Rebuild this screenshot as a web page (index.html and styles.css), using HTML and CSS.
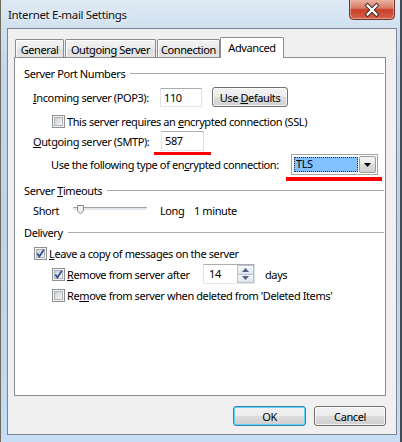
FILE: index.html
```html
<!DOCTYPE html>
<html>
<head>
<meta charset="utf-8">
<link rel="stylesheet" href="styles.css">
</head>
<body>
<div class="window">
  <div class="titlebar">
    <span class="title">Internet E-mail Settings</span>
    <div class="close">
      <svg width="46" height="20" viewBox="0 0 46 20">
        <defs>
          <linearGradient id="cg" x1="0" y1="0" x2="0" y2="1">
            <stop offset="0" stop-color="#eab0a2"/>
            <stop offset="0.42" stop-color="#d97a64"/>
            <stop offset="0.5" stop-color="#c6402a"/>
            <stop offset="1" stop-color="#d9654c"/>
          </linearGradient>
        </defs>
        <path d="M0.5 0 V15.5 Q0.5 19.5 4.5 19.5 H41.5 Q45.5 19.5 45.5 15.5 V0" fill="url(#cg)" stroke="#6b3329"/>
        <path d="M1.5 0 V15 Q1.5 18.5 5 18.5 H41 Q44.5 18.5 44.5 15 V0" fill="none" stroke="rgba(255,220,210,0.45)"/>
        <path d="M18.5 5.5 L27.5 14.5 M27.5 5.5 L18.5 14.5" stroke="#40302c" stroke-width="4.2" stroke-linecap="square"/>
        <path d="M18.5 5.5 L27.5 14.5 M27.5 5.5 L18.5 14.5" stroke="#ffffff" stroke-width="2.2" stroke-linecap="square"/>
      </svg>
    </div>
  </div>

  <div class="client">
    <div class="tabs">
      <div class="tab t-general"><span>General</span></div>
      <div class="tab t-outgoing"><span>Outgoing Server</span></div>
      <div class="tab t-connection"><span>Connection</span></div>
      <div class="tab active t-advanced"><span>Advanced</span></div>
    </div>

    <div class="panel">
      <div class="ghead g1"><span>Server Port Numbers</span><i class="gline"></i></div>

      <div class="row r-incoming">
        <span class="lbl w-in"><u>I</u>ncoming server (POP3):</span>
        <div class="tb tb-in">110</div>
        <div class="btn btn-defaults"><span>Use <u>D</u>efaults</span></div>
      </div>

      <div class="row r-ssl">
        <span class="cb"><i></i></span>
        <span class="cbl">This server requires an <u>e</u>ncrypted connection (SSL)</span>
      </div>

      <div class="row r-outgoing">
        <span class="lbl w-out"><u>O</u>utgoing server (SMTP):</span>
        <div class="tb tb-out">587</div>
      </div>

      <div class="row r-use">
        <span class="lbl w-use">Use the following type of en<u>c</u>rypted connection:</span>
        <div class="combo">
          <div class="combo-val"><span class="sel">TLS</span></div>
          <div class="combo-btn">
            <svg width="7" height="4" viewBox="0 0 7 4"><path d="M0 0 H7 L3.5 4 Z" fill="#000"/></svg>
          </div>
        </div>
      </div>

      <div class="ghead g2"><span>Server <u>T</u>imeouts</span><i class="gline"></i></div>

      <div class="row r-short">
        <span class="lbl w-short">Short</span>
        <span class="slider">
          <svg width="74" height="16" viewBox="0 0 74 16">
            <rect x="0" y="5" width="74" height="1" fill="#a3a3a3"/>
            <rect x="0" y="6" width="74" height="2" fill="#e3e8ec"/>
            <path d="M4.5 3.5 H10.5 V9 L7.5 11.5 L4.5 9 Z" fill="#f1f1f1" stroke="#8a8a8a"/>
          </svg>
        </span>
        <span class="lbl w-long">Long</span>
        <span class="lbl">1 minute</span>
      </div>

      <div class="ghead g3"><span>Delivery</span><i class="gline"></i></div>

      <div class="row r-leave">
        <span class="cb checked"><i></i>
          <svg class="chk" width="13" height="13" viewBox="0 0 13 13"><path d="M3.3 6.4 L5.4 9.4 L9.8 2.8" fill="none" stroke="#2e4d91" stroke-width="1.7"/></svg>
        </span>
        <span class="cbl"><u>L</u>eave a copy of messages on the server</span>
      </div>

      <div class="row r-after">
        <span class="cb checked"><i></i>
          <svg class="chk" width="13" height="13" viewBox="0 0 13 13"><path d="M3.3 6.4 L5.4 9.4 L9.8 2.8" fill="none" stroke="#2e4d91" stroke-width="1.7"/></svg>
        </span>
        <span class="cbl w-after"><u>R</u>emove from server after</span>
        <div class="spin">
          <span class="spin-val">14</span>
          <span class="spin-btns">
            <span class="sb up"><svg width="7" height="4" viewBox="0 0 7 4"><path d="M0 4 H7 L3.5 0 Z" fill="#4d6185"/></svg></span>
            <span class="sb down"><svg width="7" height="4" viewBox="0 0 7 4"><path d="M0 0 H7 L3.5 4 Z" fill="#4d6185"/></svg></span>
          </span>
        </div>
        <span class="lbl days">days</span>
      </div>

      <div class="row r-deleted">
        <span class="cb"><i></i></span>
        <span class="cbl">Re<u>m</u>ove from server when deleted from 'Deleted Items'</span>
      </div>
    </div>

    <div class="buttons">
      <div class="btn default b-ok"><span>OK</span></div>
      <div class="btn b-cancel"><span>Cancel</span></div>
    </div>
  </div>

  <i class="mark mark1"></i>
  <i class="mark mark2"></i>
</div>
</body>
</html>
```

FILE: styles.css
```css
* { box-sizing: border-box; }
html, body { margin: 0; padding: 0; }
body {
  width: 402px;
  height: 442px;
  overflow: hidden;
  font-family: "Noto Sans", "DejaVu Sans", sans-serif;
  font-size: 11px;
  letter-spacing: -0.4px;
  color: #000;
  background: #c6dcf2;
}
u { text-decoration: underline; text-underline-offset: 1px; }

.window {
  position: relative;
  width: 402px;
  height: 442px;
  display: flex;
  flex-direction: column;
  border-left: 1px solid #6f6a5a;
  border-right: 2px solid #3e4a58;
  background:
    linear-gradient(to bottom, #dfe9f4 0px, #d3e2f1 24px, #c3d8ee 60px, #bcd3ea 220px, #c2d9f1 400px, #c7def5 442px);
}

.titlebar {
  height: 28px;
  display: flex;
  justify-content: space-between;
  align-items: flex-start;
  padding-left: 7px;
}
.title {
  margin-top: 7px;
  line-height: 16px;
  font-size: 11.5px;
  letter-spacing: -0.35px;
  color: #111;
  text-shadow: 0 0 6px rgba(255,255,255,0.9);
}
.close {
  width: 46px;
  height: 20px;
  margin-right: 5px;
}
.close svg { display: block; }

.client {
  margin-left: 6px;
  width: 390px;
  height: 407px;
  border: 1px solid #7d8590;
  background: #f0f0f0;
  display: flex;
  flex-direction: column;
}

/* tabs */
.tabs {
  display: flex;
  align-items: flex-end;
  height: 21px;
  margin-top: 8px;
  margin-left: 7px;
  margin-bottom: -1px;
  position: relative;
  z-index: 1;
}
.tab {
  height: 18px;
  margin-bottom: 1px;
  margin-right: 1px;
  border: 1px solid #898c95;
  border-bottom: none;
  border-radius: 2px 2px 0 0;
  background: linear-gradient(to bottom, #f3f3f3 0%, #ebebeb 50%, #dedede 50%, #e4e4e4 100%);
  box-shadow: inset 1px 1px 0 #fff;
  display: flex;
  align-items: center;
  justify-content: center;
  padding-top: 1px;
  white-space: nowrap;
}
.t-general { width: 49px; }
.t-outgoing { width: 91px; }
.t-connection { width: 63px; margin-right: 0; }
.tab.active {
  width: 64px;
  height: 21px;
  margin-bottom: 0;
  background: #fff;
  box-shadow: none;
  padding-top: 0;
  padding-bottom: 2px;
}

.panel {
  margin-left: 6px;
  width: 372px;
  height: 339px;
  border: 1px solid #898c95;
  background: #fff;
  display: flex;
  flex-direction: column;
}

/* group headers */
.ghead {
  display: flex;
  align-items: center;
  height: 16px;
  margin-left: 9px;
  margin-right: 1px;
  white-space: nowrap;
}
.gline {
  flex: 1;
  height: 1px;
  margin-left: 5px;
  background: #a8aaad;
}
.g1 { margin-top: 7px; }
.g2 { margin-top: 7px; }
.g3 { margin-top: 6px; }

.row {
  display: flex;
  align-items: center;
  white-space: nowrap;
}
.lbl, .cbl { display: inline-block; }

.r-incoming { height: 20px; margin-top: 6px; margin-left: 18px; }
.w-in { width: 127px; }
.r-ssl { height: 14px; margin-top: 7px; margin-left: 37px; }
.r-outgoing { height: 20px; margin-top: 3px; margin-left: 18px; }
.w-out { width: 128px; }
.r-use { height: 21px; margin-top: 3px; margin-left: 36px; }
.w-use { width: 240px; }
.r-short { height: 16px; margin-top: 4px; margin-left: 18px; }
.w-short { width: 40px; }
.w-long { width: 34px; }
.r-leave { height: 14px; margin-top: 6px; margin-left: 19px; }
.r-after { height: 20px; margin-top: 4px; margin-left: 37px; }
.w-after { width: 136px; }
.r-deleted { height: 14px; margin-top: 4px; margin-left: 37px; }

/* text box */
.tb {
  height: 19px;
  border: 1px solid;
  border-color: #abadb3 #dbdfe6 #e3e9ef #e2e3ea;
  background: #fff;
  padding-left: 3px;
  line-height: 17px;
}
.tb-in { width: 42px; }
.tb-out { width: 43px; height: 20px; line-height: 18px; }

/* buttons */
.btn {
  height: 20px;
  border: 1px solid #707070;
  border-radius: 3px;
  background: linear-gradient(to bottom, #f2f2f2 0%, #ebebeb 50%, #dddddd 50%, #cfcfcf 100%);
  box-shadow: inset 0 0 0 1px rgba(255,255,255,0.75);
  display: flex;
  align-items: center;
  justify-content: center;
  white-space: nowrap;
}
.btn-defaults { width: 76px; margin-left: 10px; }
.buttons {
  display: flex;
  justify-content: flex-end;
  gap: 8px;
  margin-top: 10px;
  margin-right: 10px;
}
.b-ok { width: 73px; }
.b-cancel { width: 72px; }
.btn.default {
  border-color: #3c7fb1;
  box-shadow: inset 0 0 0 1px #5fd4fb;
}

/* checkboxes */
.cb {
  position: relative;
  width: 13px;
  height: 13px;
  border: 1px solid #8e8f8f;
  background: #f4f4f4;
  padding: 1px;
  margin-right: 2px;
  flex: none;
}
.cb i {
  display: block;
  width: 9px;
  height: 9px;
  border: 1px solid #aeb3b9;
  background: linear-gradient(135deg, #cbcfd5 0%, #e6e7e9 60%, #f6f6f6 100%);
}
.cb .chk {
  position: absolute;
  left: -1px;
  top: -1px;
}

/* combo */
.combo {
  width: 87px;
  height: 21px;
  border: 1px solid #a5a5a5;
  background: #fff;
  display: flex;
  align-items: center;
  padding: 1px;
}
.combo-val {
  flex: 1;
  height: 17px;
  padding: 1px;
}
.sel {
  display: block;
  height: 15px;
  background: #83c1ff;
  outline: 1px dotted #2a2a2a;
  outline-offset: -1px;
  line-height: 14px;
  padding-left: 2px;
}
.combo-btn {
  width: 17px;
  height: 17px;
  border: 1px solid #9c9c9c;
  border-radius: 2px;
  background: linear-gradient(to bottom, #f4f4f4 0%, #e9e9e9 50%, #dcdcdc 50%, #d2d2d2 100%);
  display: flex;
  align-items: center;
  justify-content: center;
}
.combo-btn svg, .sb svg { display: block; }

/* slider */
.slider { width: 87px; height: 16px; }
.slider svg { display: block; }

/* spinner */
.spin {
  width: 52px;
  height: 20px;
  border: 1px solid;
  border-color: #abadb3 #dbdfe6 #e3e9ef #e2e3ea;
  background: #fff;
  display: flex;
  margin-right: 10px;
}
.spin-val {
  flex: 1;
  padding-left: 5px;
  line-height: 18px;
}
.spin-btns {
  width: 17px;
  display: flex;
  flex-direction: column;
}
.sb {
  flex: 1;
  border: 1px solid #b9c2cc;
  background: linear-gradient(to bottom, #f5f8fb, #dde5ee);
  display: flex;
  align-items: center;
  justify-content: center;
}
.sb.up { border-bottom: none; }

/* annotation marks */
.mark {
  position: absolute;
  height: 3px;
  background: #ff0000;
}
.mark1 { left: 153px; top: 152px; width: 57px; }
.mark2 { left: 285px; top: 177px; width: 96px; height: 4px; }
```
